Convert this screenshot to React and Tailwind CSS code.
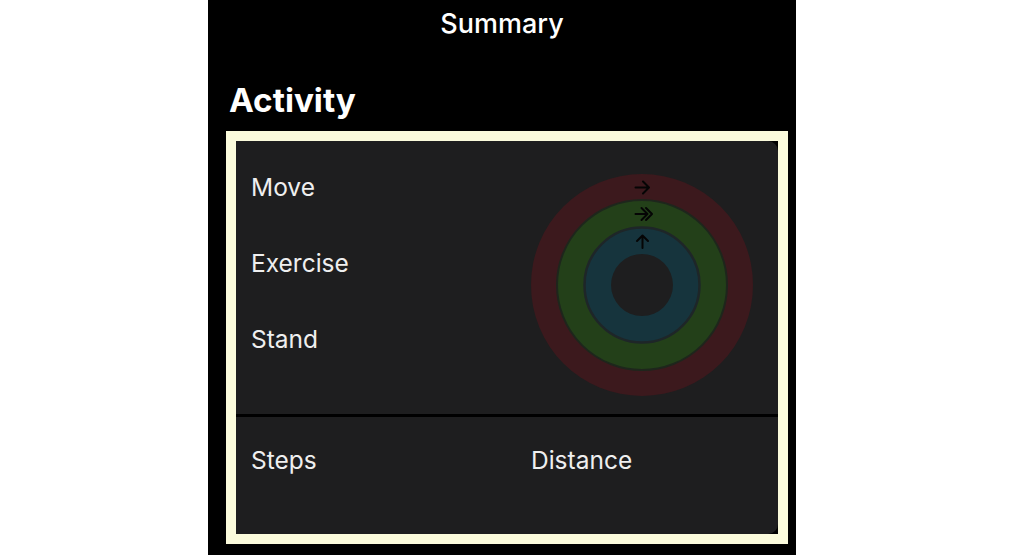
const font = { fontFamily: 'Inter, "Liberation Sans", sans-serif' }

function ActivityRings() {
  return (
    <svg viewBox="0 0 224 224" className="h-[224px] w-[224px]" fill="none" aria-hidden="true">
      <circle cx="112" cy="112" r="111" fill="#3c191d" />
      <circle cx="112" cy="112" r="85" fill="#234019" stroke="#1e261c" strokeWidth="2" />
      <circle cx="112" cy="112" r="57.500" fill="#16343d" stroke="#1e2628" strokeWidth="2.500" />
      <circle cx="112" cy="112" r="31" fill="#1e1e1f" />
      <g stroke="#050505" strokeWidth="2" strokeLinecap="round" strokeLinejoin="round">
        <path d="M105.500 14.500h13M113 8.500l6 6-6 6" />
        <path d="M105.500 41h12M111.500 35l6 6-6 6M116 35l6 6-6 6" />
        <path d="M112.500 75V62.500M107 68l5.500-5.500 5.500 5.500" />
      </g>
    </svg>
  )
}

function App() {
  return (
    <div className="flex h-[555px] justify-center overflow-hidden bg-white pr-[20px] text-[#efefef]" style={font}>
      <div className="flex h-[555px] w-[588px] flex-col bg-black">
        <h1 className="flex h-[48px] items-center justify-center text-[27px] font-medium text-white">
          Summary
        </h1>
        <h2 className="mt-[31px] h-[42px] pl-[21px] text-[33.300px] leading-[42px] font-bold text-white">
          Activity
        </h2>
        <section className="mt-[10px] ml-[18px] h-[413px] w-[562px] border-[10px] border-[#fbfbdc] bg-black">
          <div className="flex h-[273px] justify-between rounded-tr-[10px] bg-[#1e1e1f] pr-[24px] pl-[15px]">
            <div className="flex flex-col gap-[38px] pt-[27px] text-[24.500px] leading-[38px]">
              <span>Move</span>
              <span>Exercise</span>
              <span>Stand</span>
            </div>
            <div className="pt-[32px]">
              <ActivityRings />
            </div>
          </div>
          <div className="mt-[3px] grid h-[117px] grid-cols-[280px_1fr] rounded-br-[10px] bg-[#1e1e1f] pt-[24px] pl-[15px] text-[24.500px] leading-[38px]">
            <span>Steps</span>
            <span>Distance</span>
          </div>
        </section>
      </div>
    </div>
  )
}

export default App
